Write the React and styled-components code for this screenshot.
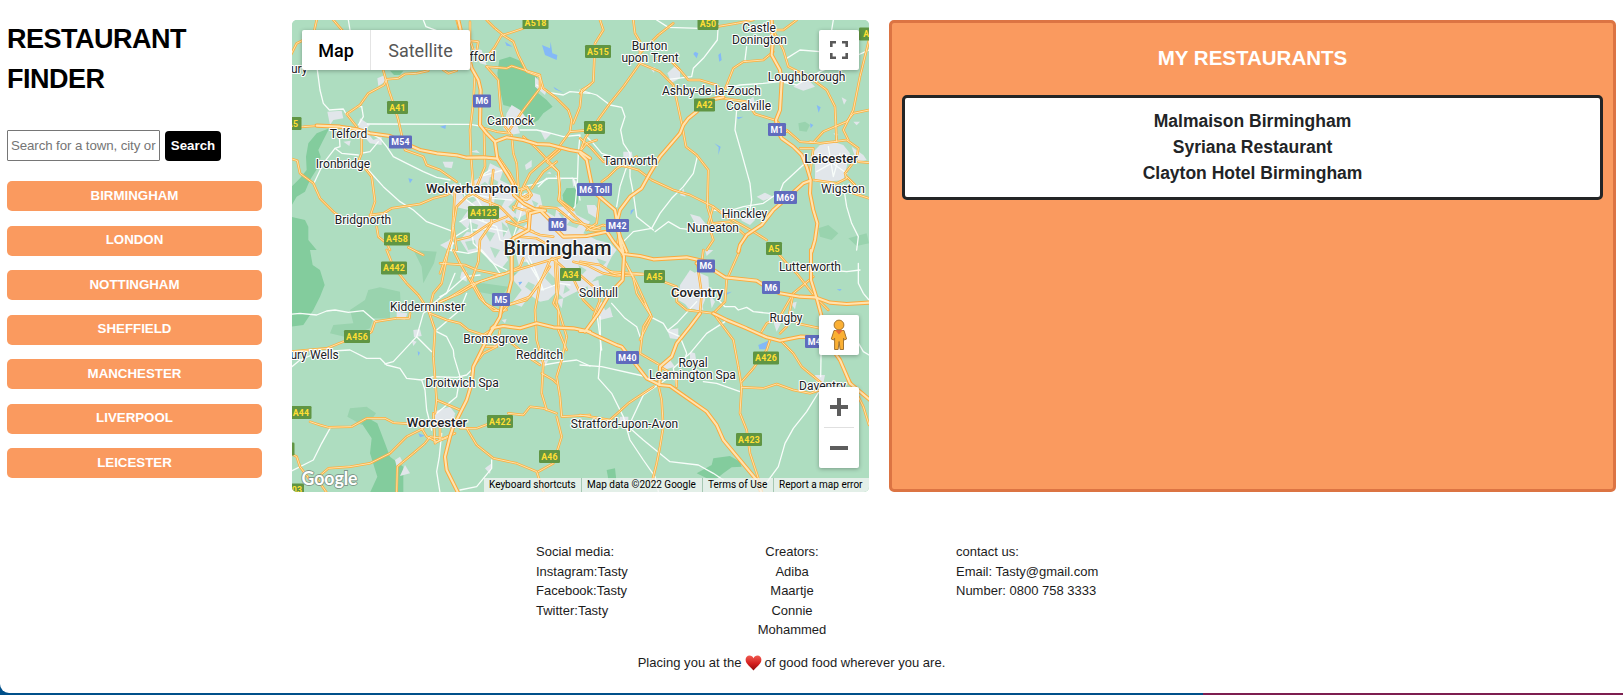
import React from "react";
import styled, { createGlobalStyle } from "styled-components";

const GlobalStyle = createGlobalStyle`
  * { box-sizing: border-box; }
  html, body { margin: 0; padding: 0; }
  body { font-family: "Liberation Sans", Arial, sans-serif; color: #000; overflow: hidden; }
`;

const Desktop = styled.div`
  height: 695px;
  padding-bottom: 2px;
  background: linear-gradient(90deg, #00508a 0 1203px, #7d1e50 1203px);
`;

const Page = styled.div`
  height: 693px;
  display: flex;
  flex-direction: column;
  background: #fff;
  border-bottom-left-radius: 9px;
`;

const Main = styled.main`
  display: grid;
  grid-template-columns: 285px 577px 727px;
  height: 492px;
  padding: 20px 7px 0;
`;

const Sidebar = styled.aside`
  display: flex;
  flex-direction: column;
  width: 255px;
`;

const Title = styled.h1`
  margin: -1px 0 0;
  width: 200px;
  font-size: 27px;
  line-height: 40px;
  font-weight: 700;
  letter-spacing: -0.5px;
`;

const SearchForm = styled.form`
  display: flex;
  align-items: flex-end;
  gap: 5px;
  margin-top: 31px;
  height: 31px;
`;

const SearchInput = styled.input`
  width: 153px;
  height: 31px;
  padding: 1px 3px;
  border: 1px solid #767676;
  border-radius: 1px;
  font: 13.3px "Liberation Sans", Arial, sans-serif;
  letter-spacing: -0.1px;
  &::placeholder { color: #757575; opacity: 1; }
`;

const SearchButton = styled.button`
  width: 56px;
  height: 30px;
  padding: 0 0 2px;
  border: 0;
  border-radius: 4px;
  background: #000;
  color: #fff;
  font: 700 13.3px "Liberation Sans", Arial, sans-serif;
`;

const CityList = styled.div`
  display: flex;
  flex-direction: column;
  gap: 14.5px;
  margin-top: 20px;
`;

const CityButton = styled.button`
  height: 30px;
  padding: 0 0 2px;
  border: 0;
  border-radius: 5px;
  background: #fa9a5f;
  color: #fff;
  font: 700 13.3px "Liberation Sans", Arial, sans-serif;
`;

const MapFrame = styled.section`
  position: relative;
  height: 472px;
  border-radius: 5px;
  overflow: hidden;
  background: #aeddc0;
  font-family: Roboto, sans-serif;
`;

const MapDrawing = styled.svg`
  display: block;
  width: 577px;
  height: 472px;
`;

const TypeSwitch = styled.div`
  position: absolute;
  left: 10px;
  top: 10px;
  display: flex;
  height: 40px;
  background: #fff;
  border-radius: 2px;
  box-shadow: 0 1px 4px rgba(0, 0, 0, 0.3);
`;

const TypeButton = styled.button`
  width: ${(p) => (p.$active ? 68 : 100)}px;
  padding: 0;
  border: 0;
  border-left: ${(p) => (p.$active ? "0" : "1px solid #e4e4e4")};
  background: none;
  color: ${(p) => (p.$active ? "#000" : "#565656")};
  font: ${(p) => (p.$active ? 500 : 400)} 18px Roboto, sans-serif;
`;

const ControlStack = styled.div`
  position: absolute;
  right: 10px;
  top: ${(p) => p.$top}px;
  width: 40px;
  display: flex;
  flex-direction: column;
  align-items: center;
  background: #fff;
  border-radius: 2px;
  box-shadow: 0 1px 4px rgba(0, 0, 0, 0.3);
`;

const ControlButton = styled.button`
  width: 40px;
  height: 40px;
  display: grid;
  place-items: center;
  padding: 0;
  border: 0;
  background: none;
`;

const Divider = styled.div`
  width: 30px;
  height: 1px;
  background: #e0e0e0;
`;

const Attribution = styled.div`
  position: absolute;
  right: 0;
  bottom: 0;
  display: flex;
  height: 14px;
  font-size: 10px;
  line-height: 14px;
  color: #000;
  white-space: nowrap;
`;

const AttributionItem = styled.span`
  width: ${(p) => p.$w}px;
  padding-left: 5px;
  background: rgba(245, 245, 245, 0.74);
  border-left: 1px solid rgba(150, 190, 165, 0.8);
  &:first-child { border-left: 0; }
`;

const Favourites = styled.section`
  height: 472px;
  margin-left: 20px;
  margin-right: -20px;
  width: 727px;
  padding: 20px 10px 0;
  border: 3px solid #dc7443;
  border-radius: 5px;
  background: #fa9a5f;
  text-align: center;
`;

const FavouritesTitle = styled.h2`
  margin: 0;
  font-size: 20.5px;
  line-height: 30px;
  color: #fff;
`;

const FavouritesList = styled.ul`
  list-style: none;
  height: 105px;
  margin: 22px 0 0;
  padding: 10px 0 0;
  border: 3px solid #232526;
  border-radius: 5px;
  background: #fff;
`;

const FavouriteItem = styled.li`
  height: 26px;
  line-height: 26px;
  font-size: 17.5px;
  font-weight: 700;
  color: #222426;
`;

const Footer = styled.footer`
  padding-top: 50px;
  font-size: 13px;
  line-height: 19.5px;
  color: #1c1c1c;
`;

const FooterColumns = styled.div`
  display: grid;
  grid-template-columns: 150px 212px 220px;
  margin-left: 536px;
  height: 98px;
`;

const FooterColumn = styled.div`
  text-align: ${(p) => (p.$center ? "center" : "left")};
  padding-left: ${(p) => p.$pad || 0}px;
  white-space: nowrap;
`;

const Tagline = styled.p`
  display: flex;
  align-items: center;
  justify-content: center;
  gap: 3px;
  width: 1583px;
  margin: 13px 0 0;
  letter-spacing: 0.03px;
  & svg { display: block; }
`;

/* Map artwork is plotted on five sheets drawn at three times size. */
const SHEETS = {
  nw: [290, 10],
  ne: [580, 10],
  sw: [290, 250],
  se: [580, 250],
  mid: [440, 150],
};

const FORESTS = [
  ["nw", "628,150 660,140 690,152 715,185 740,195 745,250 770,270 788,290 760,310 745,330 720,345 690,310 660,290 640,285 630,240 622,190"],
  ["nw", "118,355 95,400 85,420 92,440 85,470 60,510 45,545 20,560 0,595 0,535 30,505 50,480 48,440 55,400 80,370"],
  ["nw", "0,620 45,630 55,650 55,690 80,720 0,720"],
  ["nw", "830,535 855,535 865,555 862,580 845,597 822,580 818,555"],
  ["nw", "300,182 340,182 330,195 312,195"],
  ["sw", "0,0 60,0 68,45 90,60 104,105 90,140 70,180 40,225 0,230"],
  ["sw", "215,520 235,505 262,520 285,580 300,620 340,650 340,728 240,728 262,680 240,610 245,565"],
  ["se", "350,670 395,645 400,625 450,618 480,635 485,650 455,652 430,670 405,690 380,685"],
  ["se", "80,660 105,655 110,700 88,705"],
];

const WOODS = [
  ["sw", "235,120 270,112 330,125 332,160 300,170 300,205 250,205 240,235 170,262 120,250 130,225 190,220 180,180 225,150"],
  ["sw", "370,0 440,5 432,40 400,100 395,50"],
  ["sw", "180,475 230,470 258,490 240,515 215,525 190,510 172,500"],
  ["mid", "95,400 130,400 205,410 190,432 150,432 112,425"],
  ["mid", "220,370 280,360 275,390 230,395"],
  ["ne", "655,340 675,335 690,345 680,365 658,362"],
  ["ne", "715,655 745,645 775,670 755,690 720,680"],
  ["ne", "805,685 860,670 867,700 830,708"],
];

const TOWNS = [
  ["nw", "665,285 690,300 710,325 680,340 690,370 660,375 640,355 650,310"],
  ["nw", "112,305 155,302 160,325 130,330 120,345"], ["nw", "160,395 182,392 178,408"],
  ["nw", "210,325 240,345 225,360 250,390 275,380 275,405 240,400 205,360"],
  ["nw", "262,205 285,195 285,215 265,228"], ["nw", "458,455 490,455 485,475 465,472"],
  ["nw", "735,200 750,215 770,240 765,255 735,230"], ["nw", "750,360 785,370 765,390"], ["nw", "550,115 575,120 590,165 570,160"],
  ["ne", "262,190 285,168 300,180 300,205 275,218"], ["ne", "640,230 680,205 705,230 670,242"], ["ne", "785,262 800,270 792,284"],
  ["ne", "210,175 226,172 222,188"], ["ne", "130,425 155,425 160,450 130,450"], ["ne", "500,275 520,260 530,300"],
  ["ne", "700,425 720,405 760,395 790,405 810,430 800,470 790,510 740,515 705,515 705,470"],
  ["ne", "815,410 850,435 860,450 830,455"], ["ne", "820,335 840,335 830,346"], ["ne", "760,370 775,372 770,380"],
  ["ne", "330,612 360,620 380,645 350,650"], ["ne", "480,610 510,600 525,630 510,645 485,632"], ["ne", "530,560 555,548 580,560 550,572"],
  ["mid", "10,110 45,100 70,115 90,100 140,70 150,40 190,60 180,90 220,110 235,140 205,170 230,195 200,220 215,260 190,300 205,330 185,355 150,335 125,300 85,310 60,270 85,240 60,215 85,180 45,170 40,140"],
  ["mid", "240,135 270,125 300,135 310,180 345,200 350,170 395,170 410,195 450,215 430,250 470,270 510,280 530,300 515,320 500,350 510,370 470,380 440,410 400,430 370,445 350,425 325,450 300,455 270,435 245,470 215,460 245,420 215,385 240,360 230,320 245,285 220,260 250,220 225,200"],
  ["mid", "255,45 275,30 275,50 258,60"], ["mid", "440,165 465,165 478,185 470,205 445,190"], ["mid", "320,70 330,65 334,72"],
  ["mid", "395,80 415,100 400,110"], ["mid", "90,5 110,0 120,10"], ["mid", "345,75 365,85 360,100"],
  ["mid", "65,365 80,362 80,395 60,385"], ["mid", "0,285 30,270 45,280 25,300"], ["mid", "440,400 475,390 480,420 450,440"],
  ["mid", "485,490 510,470 518,500"], ["mid", "720,135 730,115 737,140"], ["mid", "350,450 370,445 365,475"],
  ["mid", "745,380 770,365 805,380 808,430 785,455 790,480 745,475 720,440 740,420 735,395"],
  ["se", "300,105 330,60 365,80 385,100 375,150 360,185 320,165 295,150"], ["se", "388,130 405,155 395,175"],
  ["se", "45,175 65,155 75,180 100,200 60,210"], ["se", "262,240 295,235 295,268 270,265"], ["se", "330,305 345,310 350,340 330,335"],
  ["se", "580,215 610,205 590,245"], ["se", "632,160 650,155 645,178"], ["se", "230,345 270,330 285,350 250,360"], ["se", "120,500 145,500 145,535 115,525"],
  ["se", "705,375 735,375 730,400 708,395"], ["se", "375,0 400,0 380,18"],
  ["sw", "430,485 480,470 495,490 490,520 440,525"], ["sw", "315,630 330,620 340,640 320,650"], ["sw", "345,645 360,670 330,678"],
  ["sw", "370,240 390,238 395,258 372,262"], ["sw", "585,655 605,640 600,672"], ["sw", "365,270 380,275 370,288"], ["sw", "320,185 352,190 345,210 320,205"],
  ["sw", "745,335 775,330 765,350"], ["sw", "600,270 625,265 620,295"], ["sw", "635,210 650,207 645,220"],
];

const PARKS = [
  ["mid", "60,118 85,125 110,150 95,160 70,140"], ["mid", "100,120 135,95 150,110 125,130"], ["mid", "150,80 175,95 165,125 145,100"],
  ["mid", "165,140 195,150 180,180 160,170"], ["mid", "90,215 115,225 105,250 80,245"], ["mid", "130,240 165,250 150,275"],
  ["mid", "75,275 105,270 110,295 85,300"], ["mid", "150,290 180,300 165,325"], ["mid", "185,215 205,235 190,262"],
  ["mid", "235,205 262,190 268,215 245,235"], ["mid", "275,150 295,160 285,175"], ["mid", "395,205 425,215 410,235 380,225"],
  ["mid", "235,275 262,280 255,300"], ["mid", "455,285 485,290 475,305 450,300"], ["mid", "250,335 285,340 270,352 245,350"],
  ["mid", "470,325 500,335 485,352"], ["mid", "325,365 350,390 340,410 315,385"], ["mid", "265,395 285,405 275,425 255,410"],
  ["mid", "415,345 440,360 425,375"], ["mid", "375,405 390,420 370,432"], ["mid", "355,190 372,185 370,210"],
];

const WATER = [
  ["nw", "756,105 780,115 782,95 787,130 802,135 800,150 765,135"], ["nw", "645,95 668,110 650,107"], ["nw", "450,350 468,345 466,357"],
  ["nw", "790,230 820,248 795,238"], ["nw", "355,505 368,508 360,520"], ["ne", "345,125 355,130 350,145 340,132"], ["ne", "415,135 422,128 425,150 418,155"],
  ["ne", "710,285 722,292 716,308"], ["ne", "690,340 700,345 692,355"], ["ne", "470,322 490,320 475,328"], ["ne", "155,600 163,598 152,612"],
  ["ne", "403,400 422,410 415,435 416,412"], ["mid", "572,182 582,177 572,195"], ["mid", "240,395 246,396 237,406"], ["sw", "383,303 390,308 385,318"],
  ["se", "535,285 570,270 560,298 538,298"], ["se", "430,130 455,125 435,138"], ["se", "770,118 785,117 780,123"], ["sw", "685,97 697,95 690,104"], ["sw", "385,550 405,557 390,562"],
];

const MINOR = [
  ["nw", "82,180 90,240 100,280 118,300 160,297 170,315 200,290 215,290"],
  ["nw", "232,342 540,343 580,350"], ["nw", "175,30 180,60"], ["nw", "400,30 408,50 440,62"],
  ["nw", "148,380 150,410 135,415 100,460 72,520"], ["nw", "135,415 155,430 205,435"], ["nw", "212,430 240,425 265,395"],
  ["nw", "220,360 270,385 290,410 310,440 350,460 400,485 440,502 480,510"],
  ["nw", "235,480 280,530 330,575 370,600 410,635 450,650 490,665 485,720"],
  ["nw", "690,360 740,360 775,368 820,380 870,375 865,430 862,520 870,570"],
  ["nw", "600,480 570,500 640,480"], ["nw", "740,225 780,248 820,255 840,245 900,250"], ["nw", "215,290 220,320 205,345"],
  ["nw", "700,530 745,520 775,505 810,505 860,505"],
  ["ne", "0,240 50,255 90,285 125,292 135,320 122,360 130,400 150,430 150,500 160,550 170,620 220,660"],
  ["ne", "415,40 412,90 370,145 340,175 335,200 265,208"], ["ne", "230,30 265,52 360,55"],
  ["ne", "420,240 480,225 550,220 600,215 650,225 720,185 800,150 867,120"],
  ["ne", "470,300 465,360 485,430 510,520 515,570 510,600"],
  ["ne", "352,440 340,490 310,530 275,565 240,610 215,655 160,665 130,695"],
  ["ne", "225,665 265,635 300,655 380,665"], ["ne", "400,600 440,605 490,590 550,580 600,545 610,520 680,455"],
  ["ne", "760,30 750,90 835,150"], ["ne", "790,525 800,590 815,640 835,680 830,720"], ["ne", "500,110 495,150 500,155"], ["ne", "620,145 660,120 720,125"],
  ["ne", "20,380 40,400 65,430 130,450 150,460"], ["ne", "140,470 120,530 110,590"],
  ["ne", "745,410 760,500 780,430"], ["ne", "715,430 800,490"], ["ne", "710,485 790,440"],
  ["sw", "0,193 30,190 80,195 110,183 135,180 175,187 220,182 260,217"],
  ["sw", "0,355 30,330 90,305 180,300 230,325 270,325 290,345 330,355 350,385 395,390 405,420 410,480 425,540"],
  ["sw", "285,342 310,335 380,260 400,190 430,170"], ["sw", "380,260 425,305"], ["sw", "440,245 470,260 490,300 492,320 510,380 500,440 440,490"],
  ["sw", "440,240 510,180 530,130"], ["sw", "395,390 430,380 500,382 530,375 550,355"], ["sw", "430,160 480,120 525,80 570,75"],
  ["sw", "455,550 448,620 440,665 450,728"], ["sw", "0,665 70,630 95,580 120,535"], ["sw", "510,720 560,710 605,655 605,630"],
  ["sw", "735,60 755,120 810,100 840,105"], ["sw", "760,345 820,335 860,330 900,348"], ["sw", "710,30 740,80"],
  ["mid", "60,100 80,150 120,180 130,215 170,230 180,270 210,280"], ["mid", "95,60 95,120 125,170"], ["mid", "25,300 85,310 125,300 160,340 180,370"],
  ["mid", "60,215 90,200 130,215"], ["mid", "45,370 20,430 0,440"], ["mid", "85,235 30,270 40,280"], ["mid", "265,320 290,370 310,420"],
  ["mid", "295,110 320,85 350,85 400,85 410,120 405,170 385,195"], ["mid", "470,485 485,600"], ["mid", "255,130 240,200 220,260"], ["mid", "90,200 100,280 160,340 200,360"],
  ["mid", "60,150 110,135 160,145 215,150"], ["mid", "100,240 150,235 200,245"],
  ["se", "95,160 135,205 170,230 180,260"], ["se", "210,200 250,220 265,245 300,260 320,310 310,340"], ["se", "350,155 290,220 265,240"],
  ["se", "60,200 62,300 55,385 95,430 130,500 150,570 190,630 225,680 235,725"], ["se", "435,215 380,250 330,310 280,355 290,410"],
  ["se", "0,345 65,350 190,378"], ["se", "145,530 190,570 270,635 355,645 400,670 430,690"], ["se", "270,380 190,435 145,530"],
  ["se", "370,395 410,400 480,425"], ["se", "720,420 680,485 640,535 615,580 595,650 540,725"], ["se", "725,210 722,380"],
  ["se", "415,150 435,170 465,170 475,180 500,172 520,185 570,190"], ["se", "752,60 800,65 840,60"], ["se", "835,40 835,100 850,130 867,150"], ["se", "830,270 850,305 867,315"],
];

const MAJOR = [
  ["nw", "80,30 70,75 20,100 0,140"], ["nw", "130,30 160,65"], ["nw", "500,30 508,60"],
  ["nw", "0,352 40,350 80,347"], ["nw", "415,182 380,190 345,192 325,205 290,208 282,225 235,250 210,285 170,312 200,350"],
  ["nw", "280,182 298,245 310,280 325,330 345,420 400,440 410,465 450,480 500,515"],
  ["nw", "215,380 215,430 207,450 225,475 245,500 255,575 240,620"],
  ["nw", "0,445 22,452 30,490 70,520 90,565 130,605 150,620"], ["nw", "240,615 280,610 305,595 390,582 430,565 470,555 500,540"],
  ["nw", "260,650 265,680 290,700 300,720"], ["nw", "355,712 400,735"],
  ["nw", "540,35 540,90 550,120"], ["nw", "590,30 615,55 640,75 700,55"], ["nw", "540,92 565,95 560,125 580,150 600,130 615,110 635,75"],
  ["nw", "638,75 670,95 685,135 710,185 750,200 760,235 800,265 835,300 845,330 840,365"],
  ["nw", "590,170 650,175 665,168 750,195 750,235 700,300 665,350 655,365"],
  ["nw", "590,170 625,210 632,300 645,350 660,370"],
  ["nw", "460,180 475,190 500,182"], ["nw", "555,190 550,280 540,360 543,440 550,530"],
  ["nw", "575,352 620,365 660,370"], ["nw", "582,362 585,470 560,530"],
  ["nw", "665,375 670,430 680,460 685,530"], ["nw", "700,380 740,415 805,485 810,570 850,600"],
  ["nw", "700,530 720,490 800,420 840,365 900,360"], ["nw", "900,225 875,240 870,290 850,340"],
  ["nw", "695,540 710,535 720,550 718,565 700,568 690,555 695,540"],
  ["nw", "500,720 490,650 500,590 530,560 560,545"], ["nw", "530,540 580,570 630,590 680,640 715,630"],
  ["nw", "650,620 600,640 540,680 500,690"], ["nw", "670,590 700,600 760,600"],
  ["ne", "60,30 70,60 45,100 40,215 0,250"], ["ne", "160,30 165,70 180,95 180,160 130,230 90,280 50,335 15,385 0,425"],
  ["ne", "280,40 235,75 200,110 180,130"], ["ne", "180,160 240,185 280,225 290,270 305,340 318,410 350,435 385,480 382,590 400,650"],
  ["ne", "225,145 270,150 300,180 325,210 360,210 410,225 430,250 460,175 490,155 550,150 580,125"],
  ["ne", "410,50 470,40 520,30"], ["ne", "430,265 500,275 525,312 590,332 620,365"], ["ne", "580,60 610,60 650,30"],
  ["ne", "580,60 610,120 625,170 655,185 700,210 740,240 765,290 770,395"],
  ["ne", "620,360 660,395 700,398 730,365 800,335 820,310 867,300"], ["ne", "805,390 790,360 805,330 820,300 840,200 867,90"],
  ["ne", "690,395 720,400 760,395 800,390 835,415 830,445 795,490 800,505 770,520 700,510"],
  ["ne", "0,385 30,410 70,455 140,470 175,480 215,510 280,540 330,555 400,590 440,620 520,665 560,690"],
  ["ne", "65,515 85,500 110,475 170,440"], ["ne", "0,425 20,400 50,390"], ["ne", "835,455 867,458"], ["ne", "800,500 825,525 820,550 867,565"],
  ["ne", "400,590 385,640 400,690 380,720"], ["ne", "400,640 450,635 500,680"], ["ne", "660,415 700,415 690,490"],
  ["mid", "300,175 260,180 268,240 280,245"], ["mid", "360,0 320,35 355,65 360,120 355,150 405,200 450,240 500,245"],
  ["mid", "175,20 210,70 235,120 260,110 275,135 260,150 240,140"], ["mid", "275,115 310,65 350,35"],
  ["mid", "0,340 75,345 110,360 185,375 240,350 250,325"], ["mid", "0,455 60,430 120,395 230,360 330,330 400,310"],
  ["mid", "160,60 150,150 155,220 120,270 115,335 95,390 135,460 180,485"], ["mid", "45,120 40,200 35,270 0,370"],
  ["mid", "200,215 250,235 300,255 340,260"], ["mid", "220,180 235,150 270,130"], ["mid", "300,170 350,175 400,215 480,235"],
  ["mid", "335,325 350,335 395,375 430,450 460,480"], ["mid", "345,330 350,430 340,460 355,480 355,540 380,600"],
  ["mid", "400,335 440,345 490,370 530,378 610,373"], ["mid", "330,330 300,400 260,450 205,465 180,495"],
  ["mid", "480,130 470,220 440,240"], ["mid", "545,315 580,385 590,430 635,500 600,570"],
  ["mid", "325,285 290,265 240,260 210,270"], ["mid", "530,290 540,230 530,200"], ["mid", "450,240 490,225 530,240"],
  ["sw", "290,0 310,50 350,100 385,135 415,180 435,240 430,320 440,450 435,490"],
  ["sw", "475,0 455,100 430,130 420,170"], ["sw", "640,70 540,105 475,145 420,170"],
  ["sw", "420,190 470,210 510,220 535,240 580,255 610,235"], ["sw", "490,0 510,40 545,100 570,145 610,182 650,180"],
  ["sw", "0,305 110,295 160,275 215,265 245,245 255,215 320,205 358,205 360,190"],
  ["sw", "60,515 75,520 90,525 115,532 185,530 230,505 285,505 310,518 370,522"],
  ["sw", "0,610 20,620 30,650 60,690 80,685 115,655 180,650 240,640 300,610 350,560 400,535"],
  ["sw", "80,685 110,728"], ["sw", "320,728 322,650 370,610 405,580 420,560 460,565 495,550"],
  ["sw", "440,450 510,480"], ["sw", "395,535 410,560 440,575 480,560"], ["sw", "510,535 560,535 600,520"],
  ["sw", "530,535 560,585 610,625 680,640 740,665 760,725"], ["sw", "800,500 815,560 790,640 745,665"],
  ["sw", "750,100 735,180 740,270 760,340 755,430 770,480"], ["sw", "800,30 805,110 800,160 830,260 815,330 800,380 810,440 815,500 900,495"],
  ["sw", "655,490 700,495 720,470 760,475 800,490"], ["sw", "755,370 790,390 800,400"],
  ["sw", "660,275 720,325 750,345"], ["sw", "632,190 640,170 720,140 780,50"], ["sw", "580,290 620,290 630,240"],
  ["sw", "430,490 435,580 450,570 450,530"], ["sw", "550,350 580,310 620,290"],
  ["se", "250,95 290,110 290,155 320,180 400,190 435,155 440,90 480,0"], ["se", "350,30 365,130 360,190"],
  ["se", "400,190 460,270 475,350 485,410 480,490 500,540 510,610 540,700 545,728"],
  ["se", "485,395 520,355 560,300 570,270"], ["se", "485,412 550,415 590,402 640,420 690,430 720,420"],
  ["se", "605,275 640,310 665,350 725,400"], ["se", "545,245 560,220 600,200 640,130 700,80"], ["se", "585,0 620,40 650,70 705,140 745,180"],
  ["se", "235,405 245,450 250,530 240,590 230,640 215,700"],
  ["se", "0,495 90,510 145,460 220,410"], ["se", "600,250 620,230 640,130"], ["se", "650,220 720,235"], ["se", "195,160 212,195 190,230 180,310 240,345"],
  ["se", "130,25 165,90 190,145 212,195"], ["se", "90,65 190,72"], ["se", "800,375 830,430 850,470 867,525"], ["se", "365,40 370,0"],
  ["se", "240,350 290,380 290,410"], ["se", "0,75 40,110 60,150 40,200"], ["se", "0,35 60,45 100,70 130,75"],
];

const MOTORWAYS = [
  ["nw", "80,347 150,350 200,358 240,370 300,378 340,398 390,420 440,430 500,436 530,443 580,442 622,446"],
  ["nw", "505,30 512,60 530,120 545,175 565,210 572,240 570,345 590,370 615,395 622,446 650,490 668,520 672,555 700,580 735,598 765,602"],
  ["nw", "615,395 650,382 700,390 740,402 780,404 840,420 870,425 900,445"],
  ["ne", "0,430 20,450 30,500 40,545 70,570 105,600 112,640 118,680 130,725"],
  ["ne", "430,262 375,272 350,305 325,325 310,345 300,370 240,440 210,490 185,535 150,560 120,600 110,640 120,680 140,725"],
  ["ne", "575,30 578,100 575,135 600,180 605,215 600,300 588,330 592,360 605,385 640,410 665,435 680,470 692,510 690,550 700,600 712,640 705,690 695,725"],
  ["ne", "690,512 670,520 620,565 580,600 545,645 500,675 480,705 475,725"],
  ["mid", "300,180 330,210 350,240 370,260 440,258 500,245 520,275 550,312 600,318 640,328 740,322 800,335"],
  ["mid", "300,182 270,190 266,240 220,265 215,300 215,390 205,430 185,470 180,500 160,535 130,580"],
  ["sw", "610,230 580,290 550,350 545,400 530,450 510,490 490,530 480,560 465,620 470,660 490,700 505,730"],
  ["sw", "605,235 640,228 690,235 740,220 790,232 850,235 900,245"],
  ["mid", "530,200 540,280 552,320 548,390 510,430 475,490 435,545"],
  ["se", "0,243 20,243 60,262 110,285 125,290 165,340 200,385 240,405 270,408 330,450 380,485 410,525 430,570 480,630 530,690 545,730"],
  ["se", "350,40 400,60 435,82 530,92 550,105 600,130 660,140 705,142 750,158 800,162 867,158"],
  ["se", "693,0 693,90 710,145 725,200 745,280 780,330 810,400 870,450"],
  ["se", "400,190 440,210 500,235 560,262 600,272 660,260 720,262"],
  ["se", "360,190 330,230 290,280 275,320 240,350 238,405"],
];

const SHIELDS = [
  ["A518", 535.5, 22.5, 26], ["A515", 598, 51.5, 26], ["A50", 708, 23.5, 21], ["A4", 869, 34, 20], ["A41", 397.5, 107.5, 21],
  ["A5", 292.5, 123.5, 18], ["A38", 594.5, 127.5, 21], ["A42", 704.5, 105, 21], ["A4123", 483.5, 212.5, 31], ["A458", 397, 239, 26],
  ["A442", 394, 268, 26], ["A34", 570.5, 274.5, 21], ["A45", 654.5, 276.5, 21], ["A5", 774, 248.5, 16], ["A456", 357, 336.5, 26],
  ["A44", 301, 412.5, 21], ["A422", 500, 421.5, 26], ["A46", 549.5, 456.5, 21], ["A426", 766, 358, 26], ["A423", 749, 439.5, 26],
  ["03", 297, 490, 14], ["", 292, 449, 5],
  ["M6", 482, 101, 18, 1], ["M54", 400.5, 142, 23, 1], ["M1", 777, 129.5, 18, 1], ["M6 Toll", 594.5, 189.5, 35, 1], ["M6", 557.5, 224.5, 18, 1],
  ["M42", 617.5, 225.5, 23, 1], ["M69", 785.5, 197.5, 23, 1], ["M5", 501, 299.5, 18, 1], ["M6", 706, 266, 18, 1], ["M6", 771, 287.5, 18, 1],
  ["M40", 627.5, 357.5, 23, 1], ["M45", 817, 341.5, 24, 1],
];

const PLACES = [
  ["Stafford", 495.5, 61, 12, "end"], ["ury", 291, 73, 12, "start"], ["Burton", 649.5, 50.5], ["upon Trent", 650, 62.5], ["Castle", 759, 32.5],
  ["Donington", 759.5, 44.5], ["Loughborough", 806.5, 81.5], ["Ashby-de-la-Zouch", 711.5, 95.5], ["Coalville", 748.5, 110.5], ["Cannock", 510.5, 125.5],
  ["Telford", 348.5, 138.5], ["Ironbridge", 343, 168.5], ["Tamworth", 630.5, 165.5], ["Wigston", 843, 193.5], ["Bridgnorth", 363, 224.5],
  ["Hinckley", 744.5, 218.5], ["Nuneaton", 713, 232.5], ["Lutterworth", 810, 271.5], ["Solihull", 598.5, 297.5], ["Kidderminster", 427.5, 311.5],
  ["Rugby", 786, 322.5], ["Bromsgrove", 495.5, 343.5], ["Redditch", 539.5, 359.5], ["ury Wells", 290.5, 359.5, 12, "start"], ["Royal", 693, 367.5],
  ["Leamington Spa", 692.5, 379.5], ["Droitwich Spa", 462, 387.5], ["Daventry", 822.5, 390.5], ["Stratford-upon-Avon", 624.5, 428.5],
];

const CITIES = [
  ["Wolverhampton", 472, 193.5, 13.1], ["Leicester", 831, 163.5, 13], ["Coventry", 697, 297.5, 13.1], ["Worcester", 437, 427.5, 13.2], ["Birmingham", 557.5, 255.5, 19.8],
];

const onSheet = (sheet) => `translate(${SHEETS[sheet].join(" ")}) scale(0.33333)`;

function Areas({ items, fill }) {
  return items.map(([sheet, points], i) => (
    <polygon key={i} transform={onSheet(sheet)} points={points} fill={fill} />
  ));
}

function Roads({ items, stroke, width }) {
  return items.map(([sheet, points], i) => (
    <polyline key={i} transform={onSheet(sheet)} points={points} fill="none" stroke={stroke}
      strokeWidth={width * 3} strokeLinejoin="round" strokeLinecap="round" />
  ));
}

function RoadMap() {
  return (
    <MapDrawing viewBox="292 20 577 472" fontFamily="Roboto, sans-serif">
      <rect x="292" y="20" width="577" height="472" fill="#aeddc0" />
      <Areas items={WOODS} fill="#99d3ae" />
      <Areas items={FORESTS} fill="#83cc9d" />
      <Areas items={TOWNS} fill="#e1e6ea" />
      <Areas items={PARKS} fill="#b4dec6" />
      <Areas items={[["nw", "830,535 855,535 865,555 862,580 845,597 822,580 818,555"]]} fill="#83cc9d" />
      <Areas items={WATER} fill="#84b9f7" />
      <Roads items={MINOR} stroke="#f8fdfa" width={1.3} />
      <Roads items={MAJOR} stroke="#fbb040" width={2.5} />
      <Roads items={MAJOR} stroke="#ffe6b5" width={0.9} />
      <Roads items={MOTORWAYS} stroke="#fba93b" width={4.1} />
      <Roads items={MOTORWAYS} stroke="#ffe3ae" width={2.1} />
      {SHIELDS.map(([name, x, y, w, motorway], i) => (
        <g key={i}>
          <rect x={x - w / 2} y={y - 6.5} width={w} height="13" rx="1.3" fill={motorway ? "#5f6bbd" : "#609543"} />
          <text x={x} y={y + 3} textAnchor="middle" fontSize="8.8" fontWeight="700" letterSpacing="0.2" fill={motorway ? "#fff" : "#ffdf35"}>{name}</text>
        </g>
      ))}
      <g fill="#202124" stroke="#fff" strokeWidth="2.2" strokeLinejoin="round" paintOrder="stroke">
        {PLACES.map(([name, x, y, size = 12, anchor = "middle"], i) => (
          <text key={i} x={x} y={y - 0.5} fontSize={size} textAnchor={anchor}>{name}</text>
        ))}
        {CITIES.map(([name, x, y, size]) => (
          <text key={name} x={x} y={y - 0.5} fontSize={size} fontWeight="500" textAnchor="middle">{name}</text>
        ))}
      </g>
      <text x="301.500" y="484.500" fontFamily="Lato, sans-serif" fontSize="19" fontWeight="700" fill="#fff" stroke="#7f9789" strokeWidth="1.800" paintOrder="stroke" textLength="56" lengthAdjust="spacingAndGlyphs">Google</text>
    </MapDrawing>
  );
}

function FullscreenIcon() {
  return (
    <svg width="18" height="18" viewBox="0 0 18 18" fill="none" stroke="#595959" strokeWidth="2.6">
      <path d="M1.300 6V1.300H6M12 1.300h4.700V6M16.700 12v4.700H12M6 16.700H1.300V12" />
    </svg>
  );
}

function PegmanIcon() {
  return (
    <svg width="18" height="32" viewBox="0 0 18 32">
      <path d="M4 11.500h10l2.600 8.500-2.300 1-.8-2v11.500h-3.400l-1-8-1 8H4.600V19l-.9 2-2.400-1z" fill="#fbb034" stroke="#a07435" strokeWidth="1" strokeLinejoin="round" />
      <path d="M5 11h8l-4 4.500z" fill="#e86a3a" />
      <circle cx="9" cy="6" r="4.900" fill="#fbb034" stroke="#a07435" strokeWidth="1" />
    </svg>
  );
}

function ZoomIcon({ plus }) {
  return (
    <svg width="18" height="18" viewBox="0 0 18 18" fill="#5d5d5d">
      <rect y="7" width="18" height="4" />
      {plus && <rect x="7" width="4" height="18" />}
    </svg>
  );
}

function HeartIcon() {
  return (
    <svg width="17" height="16" viewBox="0 0 17 16">
      <defs>
        <linearGradient id="heart" x1="0" y1="0" x2="0" y2="1">
          <stop offset="0" stopColor="#f05a50" />
          <stop offset="0.55" stopColor="#d31d1d" />
          <stop offset="1" stopColor="#8e0b0b" />
        </linearGradient>
      </defs>
      <path d="M8.500 15.500C6.500 12.500.6 9.200.6 4.700.6 2.300 2.300.6 4.500.6c1.800 0 3.300 1 4 2.600C9.200 1.600 10.700.6 12.500.6c2.200 0 3.900 1.700 3.900 4.100 0 4.500-5.900 7.800-7.900 10.800z" fill="url(#heart)" />
    </svg>
  );
}

const cities = ["BIRMINGHAM", "LONDON", "NOTTINGHAM", "SHEFFIELD", "MANCHESTER", "LIVERPOOL", "LEICESTER"];
const favourites = ["Malmaison Birmingham", "Syriana Restaurant", "Clayton Hotel Birmingham"];
const social = ["Social media:", "Instagram:Tasty", "Facebook:Tasty", "Twitter:Tasty"];
const creators = ["Creators:", "Adiba", "Maartje", "Connie", "Mohammed"];
const contact = ["contact us:", "Email: Tasty@gmail.com", "Number: 0800 758 3333"];

export default function App() {
  return (
    <Desktop>
      <GlobalStyle />
      <Page>
        <Main>
          <Sidebar>
            <Title>RESTAURANT FINDER</Title>
            <SearchForm>
              <SearchInput placeholder="Search for a town, city or postcode" />
              <SearchButton type="button">Search</SearchButton>
            </SearchForm>
            <CityList>
              {cities.map((c) => <CityButton key={c}>{c}</CityButton>)}
            </CityList>
          </Sidebar>
          <MapFrame>
            <RoadMap />
            <TypeSwitch>
              <TypeButton $active>Map</TypeButton>
              <TypeButton>Satellite</TypeButton>
            </TypeSwitch>
            <ControlStack $top={10}>
              <ControlButton aria-label="Fullscreen"><FullscreenIcon /></ControlButton>
            </ControlStack>
            <ControlStack $top={295}>
              <ControlButton aria-label="Street view"><PegmanIcon /></ControlButton>
            </ControlStack>
            <ControlStack $top={367}>
              <ControlButton aria-label="Zoom in"><ZoomIcon plus /></ControlButton>
              <Divider />
              <ControlButton aria-label="Zoom out"><ZoomIcon /></ControlButton>
            </ControlStack>
            <Attribution>
              <AttributionItem $w={97}>Keyboard shortcuts</AttributionItem>
              <AttributionItem $w={121}>Map data ©2022 Google</AttributionItem>
              <AttributionItem $w={71}>Terms of Use</AttributionItem>
              <AttributionItem $w={96}>Report a map error</AttributionItem>
            </Attribution>
          </MapFrame>
          <Favourites>
            <FavouritesTitle>MY RESTAURANTS</FavouritesTitle>
            <FavouritesList>
              {favourites.map((f) => <FavouriteItem key={f}>{f}</FavouriteItem>)}
            </FavouritesList>
          </Favourites>
        </Main>
        <Footer>
          <FooterColumns>
            <FooterColumn>{social.map((t) => <div key={t}>{t}</div>)}</FooterColumn>
            <FooterColumn $center>{creators.map((t) => <div key={t}>{t}</div>)}</FooterColumn>
            <FooterColumn $pad={58}>{contact.map((t) => <div key={t}>{t}</div>)}</FooterColumn>
          </FooterColumns>
          <Tagline><span>Placing you at the</span><HeartIcon /><span>of good food wherever you are.</span></Tagline>
        </Footer>
      </Page>
    </Desktop>
  );
}
